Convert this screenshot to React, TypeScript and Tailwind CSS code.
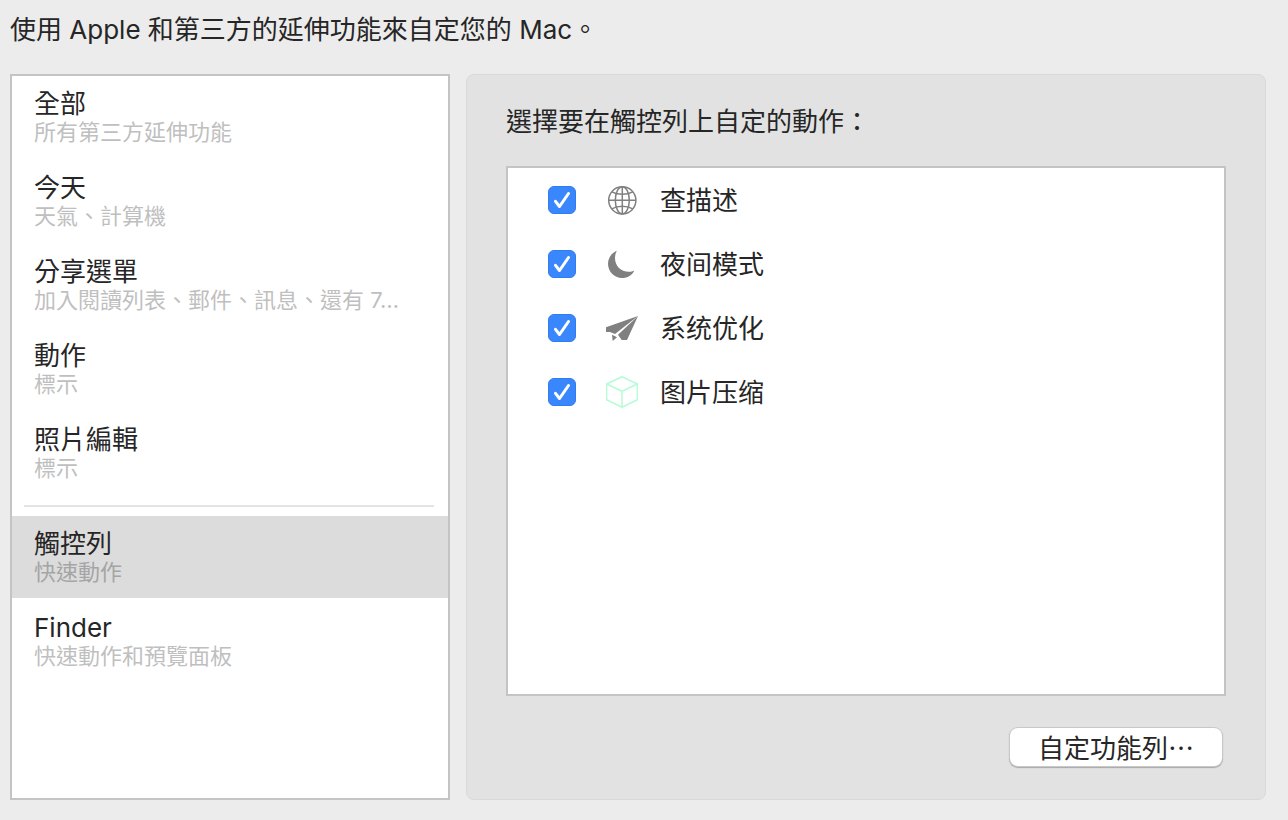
import { useState } from "react";
import type { ReactNode } from "react";

type Category = { id: string; title: string; detail: string };

const thirdParty: Category[] = [
  { id: "all", title: "全部", detail: "所有第三方延伸功能" },
  { id: "today", title: "今天", detail: "天氣、計算機" },
  { id: "share", title: "分享選單", detail: "加入閱讀列表、郵件、訊息、還有 7…" },
  { id: "actions", title: "動作", detail: "標示" },
  { id: "photos", title: "照片編輯", detail: "標示" },
];

const system: Category[] = [
  { id: "touchbar", title: "觸控列", detail: "快速動作" },
  { id: "finder", title: "Finder", detail: "快速動作和預覽面板" },
];

function GlobeIcon() {
  return (
    <svg viewBox="0 0 32 32" className="size-8" fill="none" stroke="#808080" strokeWidth="1.5" aria-hidden="true">
      <circle cx="16.300" cy="16.300" r="13.600" />
      <ellipse cx="16.300" cy="16.300" rx="7" ry="13.600" />
      <path d="M2.700 16.300h27.200M16.300 2.700v27.200" />
      <path d="M5.800 7.800Q10.500 10.300 16.300 10.300T26.800 7.800M5.800 24.800Q10.500 22.300 16.300 22.300T26.800 24.800" />
    </svg>
  );
}

function MoonIcon() {
  return (
    <svg viewBox="0 0 32 32" className="size-8" fill="#808080" aria-hidden="true">
      <path d="M10.800 2.800C5.600 5 2 10 2 15.800 2 23.600 8.200 30 16 30c5.600 0 10.200-3 12.300-7.600C26.800 23.300 25 23.800 22.800 23.800 15 23.800 9 17.800 9 10.200c0-2.800.6-5.300 1.800-7.400Z" />
    </svg>
  );
}

function PlaneIcon() {
  return (
    <svg viewBox="0 0 32 32" className="size-8" fill="#808080" aria-hidden="true">
      <path d="M32 4 0 15.200v4.800h4l5 2Z" />
      <path d="M32 4 12 22.800 15.700 28h5.300Z" />
      <path d="m6 22.800 5 2.400-4.300 3.800Z" />
    </svg>
  );
}

function BoxIcon() {
  return (
    <svg viewBox="0 0 32 32" className="size-8" fill="none" stroke="#b6fcd6" strokeWidth="1.500" strokeLinejoin="round" aria-hidden="true">
      <path d="M16 .8 31.400 8v15.800L16 31.200.6 23.800V8Z" />
      <path d="M.6 8 16 15.200 31.400 8M16 15.200v16" />
    </svg>
  );
}

const initialActions: { id: string; label: string; icon: ReactNode }[] = [
  { id: "describe", label: "查描述", icon: <GlobeIcon /> },
  { id: "night", label: "夜间模式", icon: <MoonIcon /> },
  { id: "optimize", label: "系统优化", icon: <PlaneIcon /> },
  { id: "compress", label: "图片压缩", icon: <BoxIcon /> },
];

function CategoryItem({ item, selected, onSelect }: { item: Category; selected: boolean; onSelect: () => void }) {
  return (
    <li>
      <button
        type="button"
        onClick={onSelect}
        aria-current={selected}
        className={`block w-full px-[22px] py-[13px] text-left ${selected ? "bg-[#dcdcdc]" : "bg-white"}`}
      >
        <span className="block truncate text-[26px] leading-[30px]">{item.title}</span>
        <span className={`block truncate text-[22px] leading-[26px] ${selected ? "text-[#a5a5a5]" : "text-[#bfbfbf]"}`}>
          {item.detail}
        </span>
      </button>
    </li>
  );
}

function ActionRow({ id, label, icon }: { id: string; label: string; icon: ReactNode }) {
  const [checked, setChecked] = useState(true);
  return (
    <li className="flex h-16 items-center pl-10">
      <span className="grid size-7">
        <input
          id={id}
          type="checkbox"
          checked={checked}
          onChange={() => setChecked(!checked)}
          className="peer col-start-1 row-start-1 size-7 appearance-none rounded-md border border-[#b5b5b5] bg-white checked:border-[#2f7cf3] checked:bg-[#3a87fd]"
        />
        <svg
          viewBox="0 0 28 28"
          className="pointer-events-none invisible col-start-1 row-start-1 size-7 peer-checked:visible"
          fill="none"
          stroke="#ffffff"
          strokeWidth="3"
          strokeLinecap="round"
          strokeLinejoin="round"
          aria-hidden="true"
        >
          <path d="m7.500 15.300 4 5.200L20.500 7.500" />
        </svg>
      </span>
      <label
        htmlFor={id}
        lang="zh-Hans"
        className="flex items-center gap-[22px] pl-[30px] font-['Inter','Noto_Sans_CJK_SC',sans-serif] text-[26px] leading-8"
      >
        {icon}
        <span className="pt-0.5">{label}</span>
      </label>
    </li>
  );
}

export default function App() {
  const [current, setCurrent] = useState("touchbar");
  const renderItem = (item: Category) => (
    <CategoryItem key={item.id} item={item} selected={item.id === current} onSelect={() => setCurrent(item.id)} />
  );

  return (
    <div
      lang="zh-Hant"
      className="flex min-h-screen flex-col bg-[#ececec] pt-3.5 pr-[22px] pb-5 pl-2.5 font-['Inter','Noto_Sans_CJK_TC',sans-serif] text-[#262626]"
    >
      <h1 className="text-[26px] leading-8">使用 Apple 和第三方的延伸功能來自定您的 Mac。</h1>

      <div className="mt-7 flex flex-1 gap-4">
        <nav className="w-[440px] shrink-0 border-2 border-[#c4c4c4] bg-white">
          <ul className="flex flex-col gap-0.5">{thirdParty.map(renderItem)}</ul>
          <hr className="mt-[11px] mr-3.5 mb-[9px] ml-3 border-t-2 border-[#e3e3e3]" />
          <ul className="flex flex-col gap-0.5">{system.map(renderItem)}</ul>
        </nav>

        <main className="flex min-w-0 flex-1 flex-col rounded-lg border border-[#d9d9d9] bg-[#e2e2e2] px-[39px] pt-[31px] pb-[33px]">
          <h2 className="text-[26px] leading-8">選擇要在觸控列上自定的動作：</h2>
          <ul className="mt-7 flex-1 border-2 border-[#c4c4c4] bg-white">
            {initialActions.map((action) => (
              <ActionRow key={action.id} {...action} />
            ))}
          </ul>
          <button
            type="button"
            className="mt-8 mr-1 h-[38px] self-end rounded-lg bg-white px-7 font-['Noto_Sans_CJK_TC',sans-serif] text-[26px] leading-8 shadow-[0_0_0_1px_#c8c8c8,0_1px_1px_1px_#a8a8a8]"
          >
            自定功能列…
          </button>
        </main>
      </div>
    </div>
  );
}
